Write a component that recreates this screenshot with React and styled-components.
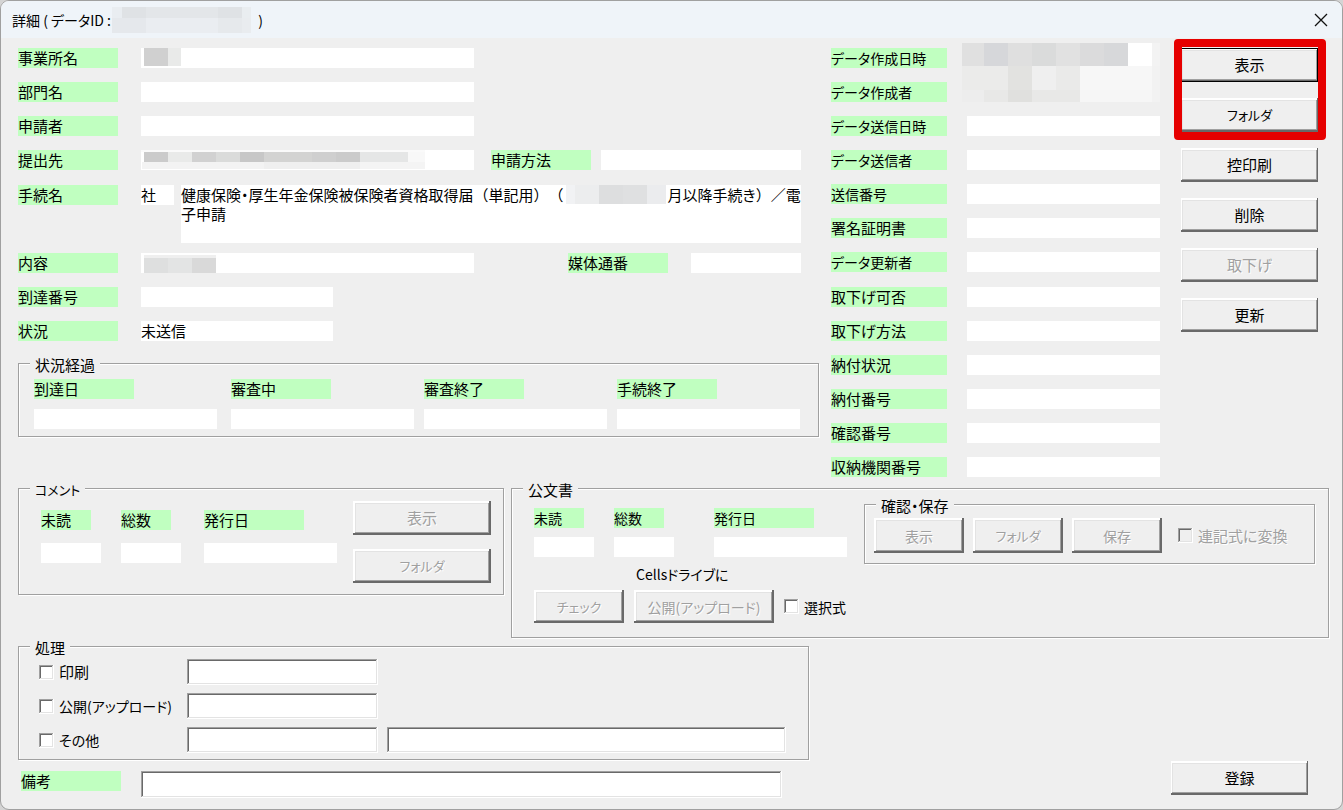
import React from "react";
import styled, { createGlobalStyle, css } from "styled-components";

const c = {
  face: "#efefef",
  title: "#eff4f9",
  green: "#c0ffc0",
  light: "#e3e3e3",
  shade: "#a0a0a0",
  dark: "#696969",
  red: "#e60000",
};

const sunken = css`
  box-shadow: inset -1px -1px 0 #fff, inset 1px 1px 0 ${c.shade},
    inset -2px -2px 0 ${c.light}, inset 2px 2px 0 ${c.dark};
`;

const Global = createGlobalStyle`
  *, *::before, *::after { box-sizing: border-box; }
  body { margin: 0; background: #d4d4d4; }
  body, button, input {
    font-family: "Noto Sans CJK JP", "Liberation Sans", sans-serif;
    font-size: 15px;
    line-height: 20px;
    color: #000;
    font-feature-settings: "palt";
  }
`;

const Window = styled.div`
  display: flex;
  flex-direction: column;
  min-height: 100vh;
  min-width: 1280px;
  background: ${c.face};
  border: 1px solid ${c.shade};
  border-radius: 9px;
  overflow: hidden;
`;

const TitleBar = styled.header`
  display: flex;
  align-items: center;
  justify-content: space-between;
  height: 37px;
  padding: 0 14px 0 11px;
  background: ${c.title};
`;

const Title = styled.h1`
  display: flex;
  align-items: center;
  gap: 1px;
  margin: 0;
  font-size: 14px;
  font-weight: 400;
  white-space: pre;
`;

const CloseButton = styled.button`
  display: flex;
  padding: 0;
  border: 0;
  background: none;
`;

const Main = styled.main`
  display: grid;
  grid-template-columns: minmax(0, 1fr) 329px 158px;
  padding: 10px 24px 0 17px;
`;

const Details = styled.section`
  display: flex;
  flex-direction: column;
  margin-right: 12px;
`;

const RowGroup = styled.div`
  display: flex;
  flex-direction: column;
  gap: 14px;
  margin-bottom: ${(p) => p.$after}px;
  padding-right: 18px;
`;

const Row = styled.div`
  display: flex;
  align-items: flex-start;
`;

const Side = styled.div`
  display: flex;
  justify-content: flex-end;
  flex: 310 1 0;
  gap: ${(p) => p.$gap}px;
  margin-left: 17px;
`;

const Tag = styled.label`
  flex: none;
  display: block;
  width: ${(p) => p.$w || 100}px;
  height: 20px;
  margin-right: ${(p) => p.$after || 0}px;
  background: ${c.green};
  font-size: ${(p) => (p.$small ? 14 : 15)}px;
  white-space: nowrap;
`;

const fieldBox = css`
  display: block;
  min-width: 0;
  width: ${(p) => (p.$w ? `${p.$w}px` : "auto")};
  flex: ${(p) => (p.$grow ? `${p.$grow} 1 0` : "none")};
  height: 20px;
  padding: 0;
  border: 0;
  background: #fff;
`;

const Field = styled.input`
  ${fieldBox}
`;

const MaskedField = styled.output`
  ${fieldBox}
`;

const Procedure = styled.output`
  flex: 1;
  min-height: 58px;
  margin-left: 7px;
  background: #fff;
  line-height: 19px;
  font-feature-settings: normal;
  text-spacing-trim: space-all;
`;

const Narrow = styled.span`
  font-feature-settings: "palt";
`;

const MosaicSvg = styled.svg`
  display: ${(p) => (p.$inline ? "inline-block" : "block")};
  margin: ${(p) => (p.$inline ? "0 2px" : "0")};
  vertical-align: top;
`;

const Group = styled.fieldset`
  display: block;
  min-width: 0;
  margin: 0;
  padding: 0;
  border: 1px solid ${c.shade};
  box-shadow: 1px 1px 0 #fff, inset 1px 1px 0 #fff;
`;

const GroupBody = styled.div`
  padding: ${(p) => p.$pad};
`;

const Legend = styled.legend`
  height: 22px;
  margin-left: 11px;
  padding: 4px 5px 0;
  background: ${c.face};
  font-size: ${(p) => (p.$kana ? 13 : 15)}px;
  line-height: 18px;
`;

const Progress = styled.div`
  display: grid;
  grid-template-columns: 187fr 183fr 183fr 183fr;
  gap: 10px;
`;

const Counts = styled.div`
  display: grid;
  grid-template-columns: ${(p) => p.$cols};
  row-gap: ${(p) => p.$gap}px;
  margin-top: 9px;
`;

const Meta = styled.section`
  position: relative;
  display: flex;
  flex-direction: column;
  justify-content: space-between;
  min-height: 429px;
`;

const MetaRow = styled.div`
  display: grid;
  grid-template-columns: 116px 193px;
  justify-content: space-between;
  height: 20px;
`;

const MetaMask = styled.div`
  position: absolute;
  top: -5px;
  left: 131px;
`;

const Actions = styled.aside`
  display: flex;
  flex-direction: column;
  gap: 16px;
  padding-left: 21px;
`;

const Highlight = styled.div`
  position: relative;
  display: flex;
  flex-direction: column;
  gap: 16px;
  &::after {
    content: "";
    position: absolute;
    inset: -9px -8px -8px -7px;
    border: 8px solid ${c.red};
    border-radius: 4px;
    pointer-events: none;
  }
`;

const Button = styled.button`
  flex: none;
  width: ${(p) => p.$w || 137}px;
  height: ${(p) => p.$h || 34}px;
  padding: 0;
  border: 0;
  background: ${c.face};
  font-size: ${(p) => p.$size || 15}px;
  box-shadow: ${(p) => (p.$primary ? "inset 0 0 0 1px #000," : "")}
    inset -${(p) => (p.$thick ? 2 : 1)}px -2px 0 ${c.dark},
    inset ${(p) => (p.$thick ? 2 : 1)}px 2px 0 #fff,
    inset -${(p) => (p.$thick ? 3 : 2)}px -3px 0 ${c.shade},
    inset ${(p) => (p.$thick ? 3 : 2)}px 3px 0 ${c.light};
  &:disabled {
    color: ${c.shade};
    text-shadow: 1px 1px 0 #fff;
  }
`;

const Panels = styled.div`
  display: grid;
  grid-template-columns: 486px minmax(0, 1fr);
  column-gap: 7px;
  align-items: start;
  padding: 0 13px 0 17px;
`;

const Inline = styled.div`
  display: flex;
  align-items: ${(p) => p.$align || "center"};
  gap: ${(p) => p.$gap || 0}px;
`;

const Stack = styled.div`
  display: flex;
  flex-direction: column;
  gap: 14px;
`;

const DriveCaption = styled.p`
  margin: 7px 0 6px 102px;
  font-size: 14px;
`;

const SaveGroup = styled(Group)`
  flex: 1;
  margin-top: -6px;
`;

const CheckLabel = styled.label`
  display: flex;
  align-items: center;
  gap: 5px;
  width: ${(p) => (p.$w ? `${p.$w}px` : "auto")};
  margin-left: ${(p) => p.$before || 0}px;
  font-size: ${(p) => (p.$small ? 14 : 15)}px;
  white-space: nowrap;
  color: ${(p) => (p.$off ? c.shade : "#000")};
  text-shadow: ${(p) => (p.$off ? "1px 1px 0 #fff" : "none")};
`;

const Check = styled.input.attrs({ type: "checkbox" })`
  appearance: none;
  flex: none;
  width: 15px;
  height: 15px;
  margin: 0;
  background: #fff;
  ${sunken}
  &:disabled {
    background: ${c.face};
  }
`;

const TextBox = styled.input`
  min-width: 0;
  width: ${(p) => (p.$w ? `${p.$w}px` : "auto")};
  flex: ${(p) => (p.$w ? "none" : "1")};
  height: ${(p) => p.$h || 26}px;
  padding: 2px 4px;
  border: 0;
  background: #fff;
  ${sunken}
`;

const Footer = styled.footer`
  display: flex;
  justify-content: space-between;
  align-items: flex-end;
  margin-top: -3px;
  padding: 0 34px 11px 17px;
`;

const FooterForm = styled.div`
  flex: 0 1 791px;
`;

const Tasks = styled.div`
  display: flex;
  flex-direction: column;
  gap: 8px;
`;

const Remark = styled(Row)`
  margin-top: 11px;
  padding: 0 27px 0 3px;
`;

const SubmitArea = styled.div`
  padding-bottom: 3px;
`;

/* A pixelated mask: rows of [height, [[width, colour], ...]] */
function Mosaic({ rows, inline }) {
  const width = Math.max(...rows.map(([, cells]) => cells.reduce((s, [w]) => s + w, 0)));
  const height = rows.reduce((s, [h]) => s + h, 0);
  let y = 0;
  return (
    <MosaicSvg width={width} height={height} $inline={inline} aria-hidden="true" shapeRendering="crispEdges">
      {rows.map(([h, cells], r) => {
        let x = 0;
        const top = y;
        y += h;
        return cells.map(([w, fill], i) => {
          const left = x;
          x += w;
          return <rect key={`${r}-${i}`} x={left} y={top} width={w} height={h} fill={fill} />;
        });
      })}
    </MosaicSvg>
  );
}

const idMask = [
  [11, [[10, "#e9edf1"], [24, "#dfe2e5"], [72, "#e3e6e9"], [24, "#dfe2e5"], [9, "#e9edf0"]]],
  [15, [[34, "#e5e8ec"], [72, "#eaedf1"], [24, "#e6e9ec"], [9, "#e9ecef"]]],
];
const officeMask = [[18, [[3, "#fff"], [24, "#d0d0d0"], [13, "#e9eae9"]]]];
const destMask = [
  [2, [[284, "#fafafa"]]],
  [10, [[3, "#fff"], [24, "#cbcbcb"], [24, "#e9eae9"], [24, "#d1d1d1"], [24, "#dadbda"], [24, "#c7c7c7"], [48, "#d3d3d2"], [24, "#cfcfcf"], [24, "#cbcbcb"], [48, "#e5e6e6"], [17, "#f8f8f8"]]],
  [7, [[1, "#fff"], [122, "#f3f3f3"], [96, "#efefef"], [65, "#f4f4f4"]]],
];
const contentMask = [
  [2, [[75, "#fff"]]],
  [3, [[3, "#fff"], [72, "#efefef"]]],
  [15, [[3, "#fff"], [24, "#dedfdf"], [24, "#e3e4e4"], [24, "#d9d9d9"]]],
];
const monthMask = [[19, [[9, "#f1f2f4"], [24, "#ecedee"], [24, "#dddedf"], [24, "#dfe0e1"], [19, "#ebecee"]]]];
const metaMask = [
  [23, [[22, "#e0e0e0"], [24, "#d6d7da"], [24, "#dfdfdf"], [24, "#dadbdb"], [24, "#e1e1e1"], [24, "#dbdbdc"], [24, "#d7d8da"], [24, "#fff"], [8, "#f3f3f3"]]],
  [24, [[46, "#ebebea"], [24, "#e2e2e0"], [24, "#efefef"], [24, "#eaeae9"], [72, "#f7f7f7"], [8, "#f2f2f2"]]],
  [12, [[22, "#ededed"], [24, "#e8e8e7"], [24, "#e0e0de"], [48, "#e8e8e7"], [72, "#f6f6f6"], [8, "#f2f2f2"]]],
];

const metaLabels = [
  ["データ作成日時", true],
  ["データ作成者", true],
  ["データ送信日時", true],
  ["データ送信者", true],
  ["送信番号", true],
  ["署名証明書"],
  ["データ更新者", true],
  ["取下げ可否"],
  ["取下げ方法"],
  ["納付状況"],
  ["納付番号"],
  ["確認番号"],
  ["収納機関番号"],
];

function CountFields({ id, cols, gap, small }) {
  return (
    <Counts $cols={cols} $gap={gap}>
      <Tag htmlFor={`${id}-unread`} $w={50} $small={small}>未読</Tag>
      <Tag htmlFor={`${id}-total`} $w={50} $small={small}>総数</Tag>
      <Tag htmlFor={`${id}-issued`} $small={small}>発行日</Tag>
      <Field id={`${id}-unread`} readOnly $w={60} />
      <Field id={`${id}-total`} readOnly $w={60} />
      <Field id={`${id}-issued`} readOnly $w={133} />
    </Counts>
  );
}

export default function App() {
  return (
    <>
      <Global />
      <Window>
        <TitleBar>
          <Title>
            <span>詳細 ( データID :</span>
            <Mosaic rows={idMask} />
            <span>{"  )"}</span>
          </Title>
          <CloseButton type="button" aria-label="閉じる">
            <svg width="14" height="14" viewBox="0 0 14 14" fill="none" stroke="#111" strokeWidth="1.3">
              <path d="M1 1 L13 13 M13 1 L1 13" />
            </svg>
          </CloseButton>
        </TitleBar>

        <Main>
          <Details>
            <RowGroup $after={15}>
              <Row>
                <Tag htmlFor="office" $after={23}>事業所名</Tag>
                <MaskedField id="office" $grow={333}><Mosaic rows={officeMask} /></MaskedField>
                <Side $gap={10} />
              </Row>
              <Row>
                <Tag htmlFor="dept" $after={23}>部門名</Tag>
                <Field id="dept" readOnly $grow={333} />
                <Side $gap={10} />
              </Row>
              <Row>
                <Tag htmlFor="applicant" $after={23}>申請者</Tag>
                <Field id="applicant" readOnly $grow={333} />
                <Side $gap={10} />
              </Row>
              <Row>
                <Tag htmlFor="dest" $after={23}>提出先</Tag>
                <MaskedField id="dest" $grow={333}><Mosaic rows={destMask} /></MaskedField>
                <Side $gap={10}>
                  <Tag htmlFor="method">申請方法</Tag>
                  <Field id="method" readOnly $grow={1} />
                </Side>
              </Row>
            </RowGroup>

            <RowGroup $after={10}>
              <Row>
                <Tag htmlFor="kind" $after={23}>手続名</Tag>
                <Field id="kind" readOnly $w={33} defaultValue="社" />
                <Procedure>
                  健康保険<Narrow>・</Narrow>厚生年金保険被保険者資格取得届（単記用）（
                  <Mosaic rows={monthMask} inline />
                  月以降手続<Narrow>き</Narrow>）／電{"子申請"}
                </Procedure>
              </Row>
            </RowGroup>

            <RowGroup $after={11}>
              <Row>
                <Tag htmlFor="content" $after={23}>内容</Tag>
                <MaskedField id="content" $grow={333}><Mosaic rows={contentMask} /></MaskedField>
                <Side $gap={23}>
                  <Tag htmlFor="media">媒体通番</Tag>
                  <Field id="media" readOnly $w={110} />
                </Side>
              </Row>
              <Row>
                <Tag htmlFor="arrival" $after={23}>到達番号</Tag>
                <Field id="arrival" readOnly $w={192} />
              </Row>
              <Row>
                <Tag htmlFor="status" $after={23}>状況</Tag>
                <Field id="status" readOnly $w={192} defaultValue="未送信" />
              </Row>
            </RowGroup>

            <Group>
              <Legend>状況経過</Legend>
              <GroupBody $pad="5px 18px 7px 15px">
                <Progress>
                  {["到達日", "審査中", "審査終了", "手続終了"].map((t, i) => (
                    <Tag key={t} htmlFor={`progress-${i}`}>{t}</Tag>
                  ))}
                  {[0, 1, 2, 3].map((i) => (
                    <Field key={i} id={`progress-${i}`} readOnly $w={183} />
                  ))}
                </Progress>
              </GroupBody>
            </Group>
          </Details>

          <Meta>
            {metaLabels.map(([text, small], i) => (
              <MetaRow key={text}>
                <Tag htmlFor={`meta-${i}`} $w={116} $small={small}>{text}</Tag>
                <Field id={`meta-${i}`} readOnly $w={193} />
              </MetaRow>
            ))}
            <MetaMask><Mosaic rows={metaMask} /></MetaMask>
          </Meta>

          <Actions>
            <Highlight>
              <Button type="button" $primary>表示</Button>
              <Button type="button" $size={13}>フォルダ</Button>
            </Highlight>
            <Button type="button">控印刷</Button>
            <Button type="button">削除</Button>
            <Button type="button" disabled>取下げ</Button>
            <Button type="button">更新</Button>
          </Actions>
        </Main>

        <Panels>
          <Group>
            <Legend $kana>コメント</Legend>
            <GroupBody $pad="2px 12px 11px 22px">
              <Inline $align="flex-start" $gap={16}>
                <CountFields id="comment" cols="80px 83px 133px" gap={13} />
                <Stack>
                  <Button type="button" disabled $w={138} $thick>表示</Button>
                  <Button type="button" disabled $w={138} $thick $size={13}>フォルダ</Button>
                </Stack>
              </Inline>
            </GroupBody>
          </Group>

          <Group>
            <Legend>公文書</Legend>
            <GroupBody $pad="0 13px 14px 22px">
              <Inline $align="flex-start" $gap={17}>
                <div>
                  <CountFields id="doc" cols="80px 100px 133px" gap={9} small />
                  <DriveCaption>Cellsドライブに</DriveCaption>
                  <Inline $gap={10}>
                    <Button type="button" disabled $w={90} $h={33} $thick $size={13}>チェック</Button>
                    <Button type="button" disabled $w={140} $h={33} $thick $size={14}>公開(アップロード)</Button>
                    <CheckLabel $small>
                      <Check />選択式
                    </CheckLabel>
                  </Inline>
                </div>
                <SaveGroup>
                  <Legend>確認・保存</Legend>
                  <GroupBody $pad="3px 9px 10px 9px">
                    <Inline $gap={9}>
                      <Button type="button" disabled $w={90} $h={35} $thick $size={14}>表示</Button>
                      <Button type="button" disabled $w={90} $h={35} $thick $size={13}>フォルダ</Button>
                      <Button type="button" disabled $w={90} $h={35} $thick $size={14}>保存</Button>
                      <CheckLabel $before={7} $off>
                        <Check disabled />連記式に変換
                      </CheckLabel>
                    </Inline>
                  </GroupBody>
                </SaveGroup>
              </Inline>
            </GroupBody>
          </Group>
        </Panels>

        <Footer>
          <FooterForm>
            <Group>
              <Legend>処理</Legend>
              <GroupBody $pad="2px 22px 6px 20px">
                <Tasks>
                  <Inline>
                    <CheckLabel $w={148}><Check />印刷</CheckLabel>
                    <TextBox aria-label="印刷" $w={191} />
                  </Inline>
                  <Inline>
                    <CheckLabel $w={148} $small><Check />公開(アップロード)</CheckLabel>
                    <TextBox aria-label="公開" $w={191} />
                  </Inline>
                  <Inline>
                    <CheckLabel $w={148} $small><Check />その他</CheckLabel>
                    <Inline $gap={9}>
                      <TextBox aria-label="その他" $w={191} />
                      <TextBox aria-label="その他の内容" $w={399} />
                    </Inline>
                  </Inline>
                </Tasks>
              </GroupBody>
            </Group>
            <Remark>
              <Tag htmlFor="remark" $after={20}>備考</Tag>
              <TextBox id="remark" $h={27} />
            </Remark>
          </FooterForm>
          <SubmitArea>
            <Button type="submit">登録</Button>
          </SubmitArea>
        </Footer>
      </Window>
    </>
  );
}
